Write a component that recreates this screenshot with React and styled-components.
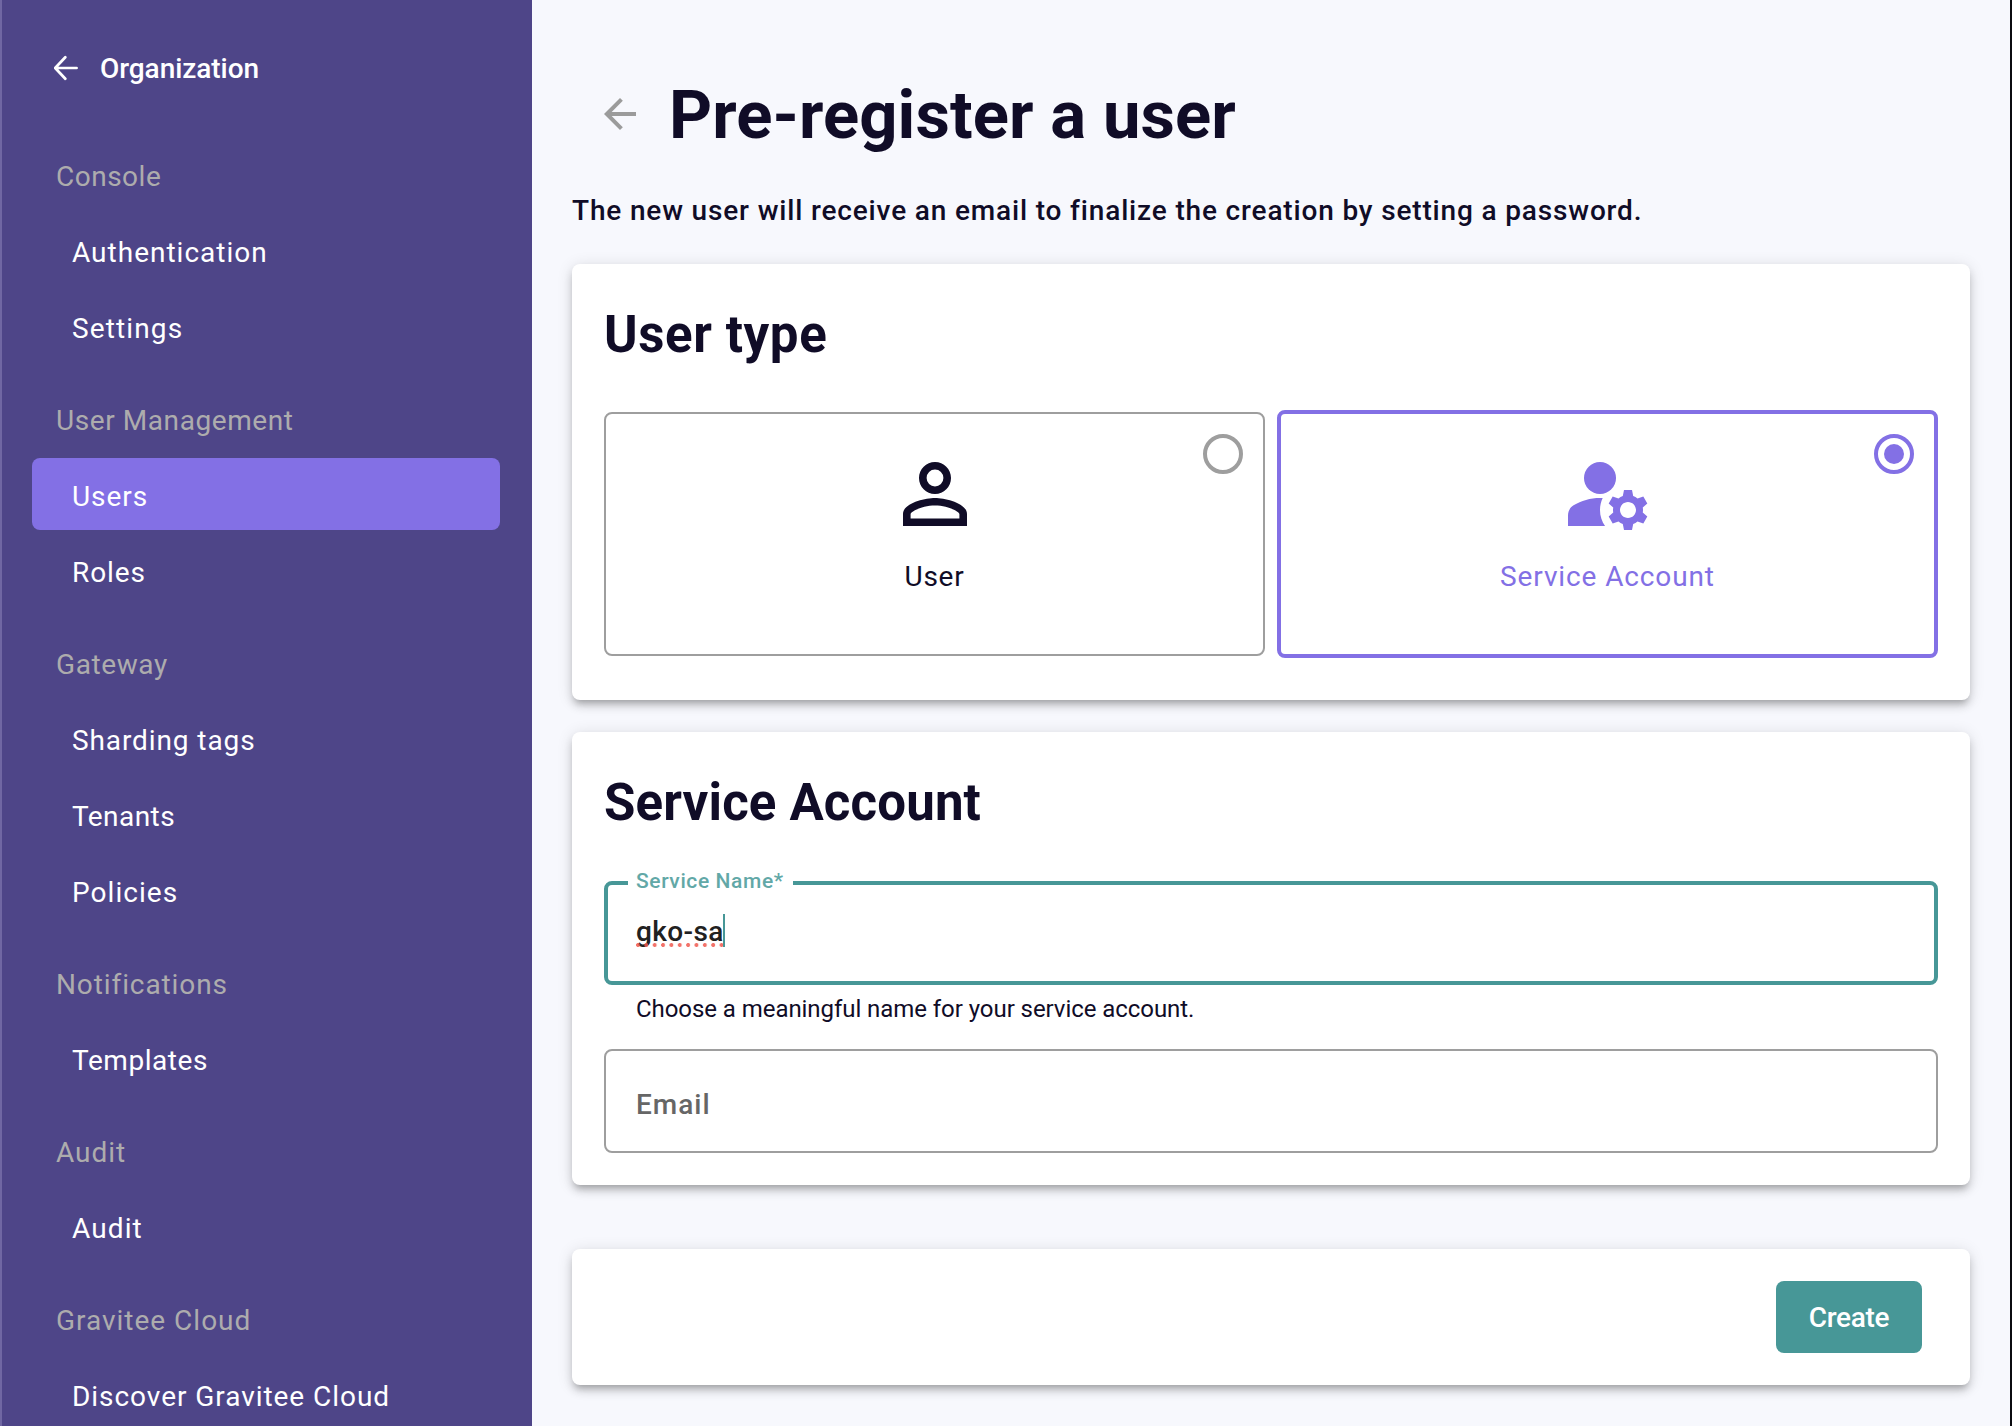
import React from "react";
import styled, { createGlobalStyle, css } from "styled-components";

const GlobalStyle = createGlobalStyle`
  *, *::before, *::after { box-sizing: border-box; }
  body {
    margin: 0;
    background: #f7f8fd;
    color: #100c27;
    font-family: Roboto, "Liberation Sans", sans-serif;
    font-size: 28px;
  }
`;

const spacing = css`
  letter-spacing: ${(p) => p.$ls ?? 0}px;
`;

const Page = styled.div`
  display: flex;
  width: 100%;
  height: 1426px;
  overflow: hidden;
  border-right: 2px solid #0b0b10;
`;

const Sidebar = styled.nav`
  flex: none;
  width: 532px;
  padding: 32px 32px 0 30px;
  background: #4e4588;
  border-left: 2px solid #7067a3;
  display: flex;
  flex-direction: column;
`;

const BackLink = styled.a`
  flex: none;
  display: flex;
  align-items: center;
  gap: 20px;
  height: 72px;
  margin-bottom: 18px;
  padding-left: 22px;
  color: #fff;
  font-weight: 500;
  ${spacing}
`;

const NavGroup = styled.section`
  flex: none;
  display: flex;
  flex-direction: column;
  gap: 4px;
  margin-top: 16px;
  margin-bottom: 4px;
`;

const navRow = css`
  display: flex;
  align-items: center;
  height: 72px;
  margin: 0;
  font-size: 28px;
  font-weight: 400;
  white-space: nowrap;
  ${spacing}
`;

const NavHeading = styled.h2`
  ${navRow}
  padding: 4px 0 0 24px;
  color: #adacad;
`;

const NavItem = styled.a`
  ${navRow}
  padding: 4px 0 0 40px;
  border-radius: 8px;
  color: #fff;
  background: ${(p) => (p.$active ? "#8370e5" : "transparent")};
`;

const Main = styled.main`
  flex: 1;
  min-width: 0;
  padding: 74px 40px 0;
  display: flex;
  flex-direction: column;
`;

const PageHeader = styled.header`
  display: flex;
  align-items: center;
  gap: 25px;
  height: 80px;
  padding-left: 24px;
`;

const BackArrow = styled.svg`
  width: 48px;
  height: 48px;
  fill: #9b9b9b;
`;

const PageTitle = styled.h1`
  margin: 0;
  padding-top: 1px;
  font-size: 67px;
  line-height: 80px;
  font-weight: 700;
  letter-spacing: 0.08px;
`;

const Lead = styled.p`
  margin: 41px 0 37px;
  line-height: 32px;
  font-weight: 500;
  letter-spacing: 0.84px;
`;

const Card = styled.section`
  flex: none;
  display: flex;
  flex-direction: column;
  height: ${(p) => p.$height}px;
  padding: 41px 32px 0;
  margin-bottom: ${(p) => p.$gap ?? 0}px;
  border-radius: 8px;
  background: #fff;
  box-shadow: 0 6px 6px -4px rgba(0, 0, 0, 0.2), 0 6px 8px rgba(0, 0, 0, 0.14),
    0 2px 16px rgba(0, 0, 0, 0.12);
`;

const CardTitle = styled.h2`
  margin: 0 0 ${(p) => p.$gap}px;
  font-size: 51px;
  line-height: 60px;
  font-weight: 700;
  ${spacing}
`;

const Options = styled.div`
  display: grid;
  grid-template-columns: 1fr 1fr;
  align-items: center;
  gap: 12px;
  height: 248px;
`;

const Option = styled.div`
  position: relative;
  display: flex;
  flex-direction: column;
  align-items: center;
  justify-content: center;
  gap: 19px;
  height: ${(p) => (p.$selected ? 248 : 244)}px;
  padding-bottom: 29px;
  border: ${(p) => (p.$selected ? "4px solid #8370e5" : "2px solid #9e9e9e")};
  border-radius: 8px;
  color: ${(p) => (p.$selected ? "#8370e5" : "#100c27")};
`;

const OptionIcon = styled.svg`
  width: 96px;
  height: 96px;
  fill: currentColor;
`;

const OptionLabel = styled.span`
  line-height: 32px;
  ${spacing}
`;

const Radio = styled.span`
  position: absolute;
  top: 20px;
  right: 20px;
  width: 40px;
  height: 40px;
  display: grid;
  place-items: center;
  border: 4px solid ${(p) => (p.$selected ? "#8370e5" : "#9e9e9e")};
  border-radius: 50%;
  &::after {
    content: "";
    width: 20px;
    height: 20px;
    border-radius: 50%;
    background: ${(p) => (p.$selected ? "#8370e5" : "transparent")};
  }
`;

const Field = styled.div`
  position: relative;
  flex: none;
  display: flex;
  align-items: center;
  height: 104px;
  border-radius: 8px;
  ${(p) =>
    p.$focused
      ? css`
          padding: 0 28px 4px;
          border: 4px solid #479797;
        `
      : css`
          padding: 6px 30px 0;
          border: 2px solid #9e9e9e;
        `}
`;

const FloatingLabel = styled.label`
  position: absolute;
  top: -18px;
  left: 20px;
  width: 165px;
  padding-left: 8px;
  background: #fff;
  color: #62a8a7;
  font-size: 21px;
  line-height: 28px;
  font-weight: 500;
  letter-spacing: 0.6px;
  white-space: nowrap;
`;

const FieldValue = styled.span`
  position: relative;
  line-height: 33px;
  color: #212121;
  font-weight: 500;
  letter-spacing: 0.38px;
  &::before {
    content: "";
    position: absolute;
    left: 0;
    top: 28px;
    width: 88px;
    height: 4px;
    background: radial-gradient(circle at 2px 2px, rgba(240, 90, 80, 0.85) 1.6px, transparent 2.3px) 0 0 / 8.36px 4px;
  }
  &::after {
    content: "";
    position: absolute;
    left: 87px;
    top: -1px;
    width: 2px;
    height: 33px;
    background: #479797;
  }
`;

const Placeholder = styled.span`
  color: #666;
  font-weight: 500;
  letter-spacing: 1px;
`;

const Hint = styled.p`
  margin: 10px 32px 26px;
  font-size: 24px;
  line-height: 28px;
  letter-spacing: -0.06px;
`;

const ActionBar = styled(Card)`
  flex-direction: row;
  align-items: center;
  justify-content: flex-end;
  padding: 0 48px;
`;

const PrimaryButton = styled.button`
  width: 146px;
  height: 72px;
  padding: 0;
  border: 0;
  border-radius: 8px;
  background: #479797;
  color: #fff;
  font: inherit;
  font-weight: 500;
  letter-spacing: -0.3px;
`;

const groups = [
  { title: "Console", ls: 0.5, items: [["Authentication", 1], ["Settings", 1.12]] },
  { title: "User Management", ls: 0.58, items: [["Users", 0.95], ["Roles", 0.88]] },
  { title: "Gateway", ls: 0.6, items: [["Sharding tags", 0.9], ["Tenants", 0.45], ["Policies", 1.05]] },
  { title: "Notifications", ls: 0.9, items: [["Templates", 0.55]] },
  { title: "Audit", ls: 0.95, items: [["Audit", 1.1]] },
  { title: "Gravitee Cloud", ls: 0.99, items: [["Discover Gravitee Cloud", 0.95]] },
];

export default function App() {
  return (
    <>
      <GlobalStyle />
      <Page>
        <Sidebar>
          <BackLink $ls={-0.06}>
            <svg width="26" height="26" viewBox="0 0 26 26" fill="none" stroke="#fff" strokeWidth="2.7" strokeLinecap="round" strokeLinejoin="round">
              <path d="M22.6 13H2M11.3 2.3L1.2 13l10.1 10.7" />
            </svg>
            Organization
          </BackLink>
          {groups.map((group) => (
            <NavGroup key={group.title}>
              <NavHeading $ls={group.ls}>{group.title}</NavHeading>
              {group.items.map(([name, ls]) => (
                <NavItem key={name} $ls={ls} $active={name === "Users"}>
                  {name}
                </NavItem>
              ))}
            </NavGroup>
          ))}
        </Sidebar>
        <Main>
          <PageHeader>
            <BackArrow viewBox="0 0 24 24">
              <path d="M20 11H7.83l5.59-5.59L12 4l-8 8 8 8 1.41-1.41L7.83 13H20v-2z" />
            </BackArrow>
            <PageTitle>Pre-register a user</PageTitle>
          </PageHeader>
          <Lead>The new user will receive an email to finalize the creation by setting a password.</Lead>
          <Card $height={436} $gap={32}>
            <CardTitle $gap={45} $ls={0.6}>User type</CardTitle>
            <Options>
              <Option>
                <OptionIcon viewBox="0 0 24 24">
                  <path d="M12 5.9a2.1 2.1 0 1 1 0 4.2 2.1 2.1 0 0 1 0-4.2m0 9c2.97 0 6.1 1.46 6.1 2.1v1.1H5.9V17c0-.64 3.13-2.1 6.1-2.1M12 4C9.79 4 8 5.79 8 8s1.79 4 4 4 4-1.79 4-4-1.79-4-4-4zm0 9c-2.67 0-8 1.34-8 4v3h16v-3c0-2.66-5.33-4-8-4z" />
                </OptionIcon>
                <OptionLabel $ls={0.71}>User</OptionLabel>
                <Radio />
              </Option>
              <Option $selected>
                <OptionIcon viewBox="0 0 24 24">
                  <circle cx="10" cy="8" r="4" />
                  <path d="M10.67 13.02c-.22-.01-.44-.02-.67-.02-2.42 0-4.68.67-6.61 1.82-.88.52-1.39 1.5-1.39 2.53V20h9.26c-.79-1.13-1.26-2.51-1.26-4 0-1.07.25-2.07.67-2.98z" />
                  <path d="M20.75 16c0-.22-.03-.42-.06-.63l1.14-1.01-1-1.73-1.45.49c-.32-.27-.68-.48-1.08-.63L18 11h-2l-.3 1.49c-.4.15-.76.36-1.08.63l-1.45-.49-1 1.73 1.14 1.01c-.03.21-.06.41-.06.63s.03.42.06.63l-1.14 1.01 1 1.73 1.45-.49c.32.27.68.48 1.08.63L16 21h2l.3-1.49c.4-.15.76-.36 1.08-.63l1.45.49 1-1.73-1.14-1.01c.03-.21.06-.41.06-.63zM17 18c-1.1 0-2-.9-2-2s.9-2 2-2 2 .9 2 2-.9 2-2 2z" />
                </OptionIcon>
                <OptionLabel $ls={0.88}>Service Account</OptionLabel>
                <Radio $selected />
              </Option>
            </Options>
          </Card>
          <Card $height={453} $gap={64}>
            <CardTitle $gap={48} $ls={0.15}>Service Account</CardTitle>
            <Field $focused>
              <FloatingLabel>Service Name*</FloatingLabel>
              <FieldValue>gko-sa</FieldValue>
            </Field>
            <Hint>Choose a meaningful name for your service account.</Hint>
            <Field>
              <Placeholder>Email</Placeholder>
            </Field>
          </Card>
          <ActionBar $height={136}>
            <PrimaryButton>Create</PrimaryButton>
          </ActionBar>
        </Main>
      </Page>
    </>
  );
}
